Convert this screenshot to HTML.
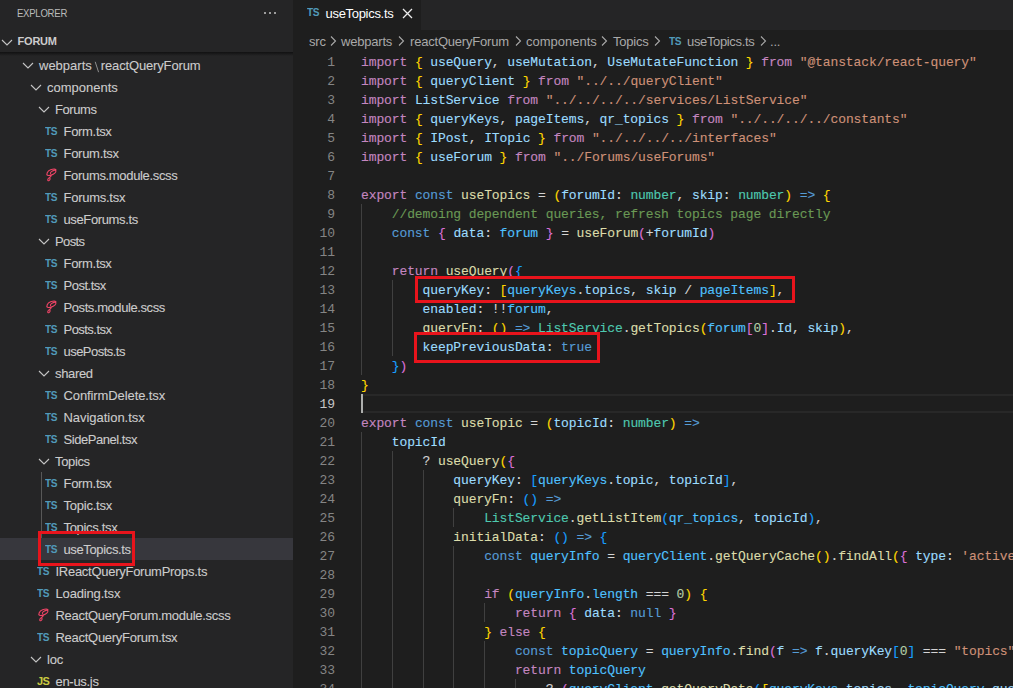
<!DOCTYPE html>
<html><head><meta charset="utf-8">
<style>
html,body{margin:0;padding:0;}
body{width:1013px;height:688px;overflow:hidden;position:relative;background:#1e1e1e;font-family:"Liberation Sans",sans-serif;}
#side{position:absolute;left:0;top:0;width:293px;height:688px;background:#252526;overflow:hidden;}
#side .title{position:absolute;left:17px;top:7px;font-size:11px;line-height:12px;color:#bbbbbb;letter-spacing:-0.3px;transform:scaleX(0.87);transform-origin:left top;}
#side .dots{position:absolute;left:262.8px;top:11.5px;}
#side .dots i{position:absolute;top:0;width:2.5px;height:2.5px;background:#c5c5c5;border-radius:50%;}
#side .sec{position:absolute;left:0;top:30px;width:293px;height:22px;}
#side .sec .nm{position:absolute;left:17.5px;top:0;font-size:11px;line-height:22px;font-weight:bold;color:#cccccc;letter-spacing:-0.2px;}
#side .sec .chev{position:absolute;left:1px;top:9px;}
#side .shadow{position:absolute;left:0;top:52px;width:293px;height:4px;background:linear-gradient(rgba(0,0,0,0.55),rgba(0,0,0,0));z-index:3;}
.row{position:absolute;left:0;width:293px;height:22px;}
.row.sel{background:#37373d;}
.row .nm{position:absolute;top:0;font-size:13px;line-height:22px;color:#cccccc;white-space:pre;letter-spacing:-0.25px;padding-top:0.5px;-webkit-text-stroke:0.1px currentColor;}
.row .ic{position:absolute;top:0;height:22px;}
.row .chev{position:absolute;left:0;top:8px;}
.bs{color:transparent;padding:0 2.6px 0 3px;}
.tsi{position:absolute;left:-1px;top:5px;font-size:11px;line-height:12px;font-weight:bold;color:#519aba;letter-spacing:-0.4px;transform:scaleX(0.92);transform-origin:left top;}
.jsi{position:absolute;left:-1px;top:5px;font-size:11px;line-height:12px;font-weight:bold;color:#cbcb41;letter-spacing:-0.6px;}
.sass{position:absolute;left:-4px;top:1px;}
.guide{position:absolute;left:41px;top:472px;width:1px;height:66px;background:#585858;}
.redbox{position:absolute;border:3px solid #e8141c;box-sizing:border-box;z-index:5;}

#tabs{position:absolute;left:293px;top:0;width:720px;height:30px;background:#252526;}
#tab{position:absolute;left:0;top:0;width:128px;height:30px;background:#1e1e1e;}
#tab .tsi{left:14px;top:5.5px;}
#tab .nm{position:absolute;left:32.5px;top:5.5px;font-size:13px;line-height:16px;color:#ffffff;letter-spacing:-0.3px;}
#tab .x{position:absolute;left:108.6px;top:7.6px;}
#crumbs{position:absolute;left:293px;top:30px;width:720px;height:22px;font-size:13px;color:#a9a9a9;}
#crumbs span.bc{position:absolute;top:1px;line-height:22px;white-space:pre;letter-spacing:-0.2px;}
#crumbs svg{position:absolute;top:6px;}
#crumbs .tsi{top:5px;}

#gutter{position:absolute;left:293px;top:52px;width:42px;}
.num{height:19px;line-height:19px;text-align:right;font-family:"Liberation Mono",monospace;font-size:13px;color:#858585;letter-spacing:-0.1px;padding-top:1px;box-sizing:border-box;}
.num.act{color:#c6c6c6;}
#code{position:absolute;left:361px;top:52px;width:700px;font-family:"Liberation Mono",monospace;font-size:13px;color:#d4d4d4;letter-spacing:-0.106px;-webkit-text-stroke:0.12px currentColor;}
.ln{height:19px;line-height:19px;white-space:pre;padding-top:1px;box-sizing:border-box;}
.ig{position:absolute;width:1px;height:19px;background:#404040;}
.curline{position:absolute;left:361px;top:394px;width:652px;height:19px;box-sizing:border-box;border-top:2px solid #282828;border-bottom:2px solid #282828;}
.cursor{position:absolute;left:361px;top:394px;width:2px;height:19px;background:#aeafad;z-index:4;}
.k{color:#c586c0}.s{color:#569cd6}.v{color:#9cdcfe}.c{color:#4fc1ff}.f{color:#dcdcaa}.t{color:#4ec9b0}.r{color:#ce9178}.m{color:#6a9955}.n{color:#b5cea8}
.b1{color:#ffd700}.b2{color:#da70d6}.b3{color:#179fff}
</style></head><body>
<div id="side">
  <div class="title">EXPLORER</div>
  <div class="dots"><i style="left:1px"></i><i style="left:6px"></i><i style="left:11px"></i></div>
  <div class="sec"><svg class="chev" width="12" height="7" viewBox="0 0 12 7"><path d="M1 1 L6 6 L11 1" fill="none" stroke="#c5c5c5" stroke-width="1.1"/></svg><span class="nm">FORUM</span></div>
  <div class="shadow"></div>
<div class="row" style="top:54px"><span class="ic" style="left:21.5px"><svg class="chev" width="12" height="7" viewBox="0 0 12 7"><path d="M1 1 L6 6 L11 1" fill="none" stroke="#c5c5c5" stroke-width="1.1"/></svg></span><span class="nm" style="left:39.0px;letter-spacing:-0.15px"><span style="letter-spacing:0">webparts</span><span class="bs">\</span>reactQueryForum</span><svg style="position:absolute;left:94.4px;top:7px" width="6" height="12" viewBox="0 0 6 12"><path d="M1.2 0.8 L4.6 11.2" stroke="#8f8f8f" stroke-width="1"/></svg></div>
<div class="row" style="top:76px"><span class="ic" style="left:29.5px"><svg class="chev" width="12" height="7" viewBox="0 0 12 7"><path d="M1 1 L6 6 L11 1" fill="none" stroke="#c5c5c5" stroke-width="1.1"/></svg></span><span class="nm" style="left:47.0px;letter-spacing:0.0040000000000000036px">components</span></div>
<div class="row" style="top:98px"><span class="ic" style="left:37.5px"><svg class="chev" width="12" height="7" viewBox="0 0 12 7"><path d="M1 1 L6 6 L11 1" fill="none" stroke="#c5c5c5" stroke-width="1.1"/></svg></span><span class="nm" style="left:55.0px;letter-spacing:-0.433px">Forums</span></div>
<div class="row" style="top:120px"><span class="ic" style="left:46px"><span class="tsi">TS</span></span><span class="nm" style="left:63.5px;letter-spacing:-0.312px">Form.tsx</span></div>
<div class="row" style="top:142px"><span class="ic" style="left:46px"><span class="tsi">TS</span></span><span class="nm" style="left:63.5px;letter-spacing:-0.28500000000000003px">Forum.tsx</span></div>
<div class="row" style="top:164px"><span class="ic" style="left:46px"><svg class="sass" width="18" height="18" viewBox="0 0 18 18"><path d="M8.6 8.6 C7.8 7.6 9.8 6 12 5.4 C14.2 4.8 14.6 6.6 12.8 8.2 C11 9.8 7.2 11 5.6 10.2 C4 9.4 5.2 6 8.6 4.8 C10.8 4 13.4 4 14 4.8 M9.4 10.4 C8.8 11.6 7.6 12.4 6.4 13.4 C5.2 14.6 5.8 16.4 7 15.6 C8.2 14.8 8.4 13.2 7.6 12.8" fill="none" stroke="#ee4466" stroke-width="1.1" stroke-linecap="round"/></svg></span><span class="nm" style="left:63.5px;letter-spacing:-0.332px">Forums.module.scss</span></div>
<div class="row" style="top:186px"><span class="ic" style="left:46px"><span class="tsi">TS</span></span><span class="nm" style="left:63.5px;letter-spacing:-0.26px">Forums.tsx</span></div>
<div class="row" style="top:208px"><span class="ic" style="left:46px"><span class="tsi">TS</span></span><span class="nm" style="left:63.5px;letter-spacing:-0.374px">useForums.ts</span></div>
<div class="row" style="top:230px"><span class="ic" style="left:37.5px"><svg class="chev" width="12" height="7" viewBox="0 0 12 7"><path d="M1 1 L6 6 L11 1" fill="none" stroke="#c5c5c5" stroke-width="1.1"/></svg></span><span class="nm" style="left:55.0px;letter-spacing:-0.6px">Posts</span></div>
<div class="row" style="top:252px"><span class="ic" style="left:46px"><span class="tsi">TS</span></span><span class="nm" style="left:63.5px;letter-spacing:-0.312px">Form.tsx</span></div>
<div class="row" style="top:274px"><span class="ic" style="left:46px"><span class="tsi">TS</span></span><span class="nm" style="left:63.5px;letter-spacing:-0.49600000000000005px">Post.tsx</span></div>
<div class="row" style="top:296px"><span class="ic" style="left:46px"><svg class="sass" width="18" height="18" viewBox="0 0 18 18"><path d="M8.6 8.6 C7.8 7.6 9.8 6 12 5.4 C14.2 4.8 14.6 6.6 12.8 8.2 C11 9.8 7.2 11 5.6 10.2 C4 9.4 5.2 6 8.6 4.8 C10.8 4 13.4 4 14 4.8 M9.4 10.4 C8.8 11.6 7.6 12.4 6.4 13.4 C5.2 14.6 5.8 16.4 7 15.6 C8.2 14.8 8.4 13.2 7.6 12.8" fill="none" stroke="#ee4466" stroke-width="1.1" stroke-linecap="round"/></svg></span><span class="nm" style="left:63.5px;letter-spacing:-0.41500000000000004px">Posts.module.scss</span></div>
<div class="row" style="top:318px"><span class="ic" style="left:46px"><span class="tsi">TS</span></span><span class="nm" style="left:63.5px;letter-spacing:-0.5409999999999999px">Posts.tsx</span></div>
<div class="row" style="top:340px"><span class="ic" style="left:46px"><span class="tsi">TS</span></span><span class="nm" style="left:63.5px;letter-spacing:-0.5299999999999999px">usePosts.ts</span></div>
<div class="row" style="top:362px"><span class="ic" style="left:37.5px"><svg class="chev" width="12" height="7" viewBox="0 0 12 7"><path d="M1 1 L6 6 L11 1" fill="none" stroke="#c5c5c5" stroke-width="1.1"/></svg></span><span class="nm" style="left:55.0px;letter-spacing:-0.33px">shared</span></div>
<div class="row" style="top:384px"><span class="ic" style="left:46px"><span class="tsi">TS</span></span><span class="nm" style="left:63.5px;letter-spacing:-0.098px">ConfirmDelete.tsx</span></div>
<div class="row" style="top:406px"><span class="ic" style="left:46px"><span class="tsi">TS</span></span><span class="nm" style="left:63.5px;letter-spacing:-0.033999999999999996px">Navigation.tsx</span></div>
<div class="row" style="top:428px"><span class="ic" style="left:46px"><span class="tsi">TS</span></span><span class="nm" style="left:63.5px;letter-spacing:-0.452px">SidePanel.tsx</span></div>
<div class="row" style="top:450px"><span class="ic" style="left:37.5px"><svg class="chev" width="12" height="7" viewBox="0 0 12 7"><path d="M1 1 L6 6 L11 1" fill="none" stroke="#c5c5c5" stroke-width="1.1"/></svg></span><span class="nm" style="left:55.0px;letter-spacing:-0.35200000000000004px">Topics</span></div>
<div class="row" style="top:472px"><span class="ic" style="left:46px"><span class="tsi">TS</span></span><span class="nm" style="left:63.5px;letter-spacing:-0.312px">Form.tsx</span></div>
<div class="row" style="top:494px"><span class="ic" style="left:46px"><span class="tsi">TS</span></span><span class="nm" style="left:63.5px;letter-spacing:-0.232px">Topic.tsx</span></div>
<div class="row" style="top:516px"><span class="ic" style="left:46px"><span class="tsi">TS</span></span><span class="nm" style="left:63.5px;letter-spacing:-0.324px">Topics.tsx</span></div>
<div class="row sel" style="top:538px"><span class="ic" style="left:46px"><span class="tsi">TS</span></span><span class="nm" style="left:63.5px;letter-spacing:-0.36400000000000005px">useTopics.ts</span></div>
<div class="row" style="top:560px"><span class="ic" style="left:38px"><span class="tsi">TS</span></span><span class="nm" style="left:55.5px;letter-spacing:-0.274px">IReactQueryForumProps.ts</span></div>
<div class="row" style="top:582px"><span class="ic" style="left:38px"><span class="tsi">TS</span></span><span class="nm" style="left:55.5px;letter-spacing:-0.16px">Loading.tsx</span></div>
<div class="row" style="top:604px"><span class="ic" style="left:38px"><svg class="sass" width="18" height="18" viewBox="0 0 18 18"><path d="M8.6 8.6 C7.8 7.6 9.8 6 12 5.4 C14.2 4.8 14.6 6.6 12.8 8.2 C11 9.8 7.2 11 5.6 10.2 C4 9.4 5.2 6 8.6 4.8 C10.8 4 13.4 4 14 4.8 M9.4 10.4 C8.8 11.6 7.6 12.4 6.4 13.4 C5.2 14.6 5.8 16.4 7 15.6 C8.2 14.8 8.4 13.2 7.6 12.8" fill="none" stroke="#ee4466" stroke-width="1.1" stroke-linecap="round"/></svg></span><span class="nm" style="left:55.5px;letter-spacing:-0.29400000000000004px">ReactQueryForum.module.scss</span></div>
<div class="row" style="top:626px"><span class="ic" style="left:38px"><span class="tsi">TS</span></span><span class="nm" style="left:55.5px;letter-spacing:-0.28px">ReactQueryForum.tsx</span></div>
<div class="row" style="top:648px"><span class="ic" style="left:29.5px"><svg class="chev" width="12" height="7" viewBox="0 0 12 7"><path d="M1 1 L6 6 L11 1" fill="none" stroke="#c5c5c5" stroke-width="1.1"/></svg></span><span class="nm" style="left:47.0px;letter-spacing:-0.122px">loc</span></div>
<div class="row" style="top:670px"><span class="ic" style="left:38px"><span class="jsi">JS</span></span><span class="nm" style="left:55.5px;letter-spacing:-0.29300000000000004px">en-us.js</span></div>
<div class="row" style="top:692px"><span class="ic" style="left:38px"><span class="tsi">TS</span></span><span class="nm" style="left:55.5px;letter-spacing:-0.26px">mystrings.d.ts</span></div>
  <div class="guide"></div>
  <div class="redbox" style="left:38px;top:531px;width:97px;height:35px;"></div>
</div>
<div id="tabs">
  <div id="tab"><span class="tsi">TS</span><span class="nm">useTopics.ts</span>
    <svg class="x" width="11" height="11" viewBox="0 0 11 11"><path d="M1 1 L10 10 M10 1 L1 10" stroke="#ececec" stroke-width="1.3"/></svg>
  </div>
</div>
<div id="crumbs">
  <span class="bc" style="left:16px">src</span>
  <svg class="cv" style="left:37px" width="7" height="10" viewBox="0 0 7 10"><path d="M1 0.5 L5.5 5 L1 9.5" fill="none" stroke="#a9a9a9" stroke-width="1.1"/></svg>
  <span class="bc" style="left:48px">webparts</span>
  <svg class="cv" style="left:105px" width="7" height="10" viewBox="0 0 7 10"><path d="M1 0.5 L5.5 5 L1 9.5" fill="none" stroke="#a9a9a9" stroke-width="1.1"/></svg>
  <span class="bc" style="left:117px">reactQueryForum</span>
  <svg class="cv" style="left:222px" width="7" height="10" viewBox="0 0 7 10"><path d="M1 0.5 L5.5 5 L1 9.5" fill="none" stroke="#a9a9a9" stroke-width="1.1"/></svg>
  <span class="bc" style="left:233px;letter-spacing:0px">components</span>
  <svg class="cv" style="left:308px" width="7" height="10" viewBox="0 0 7 10"><path d="M1 0.5 L5.5 5 L1 9.5" fill="none" stroke="#a9a9a9" stroke-width="1.1"/></svg>
  <span class="bc" style="left:320px">Topics</span>
  <svg class="cv" style="left:361px" width="7" height="10" viewBox="0 0 7 10"><path d="M1 0.5 L5.5 5 L1 9.5" fill="none" stroke="#a9a9a9" stroke-width="1.1"/></svg>
  <span class="tsi" style="left:376px">TS</span>
  <span class="bc" style="left:394px;letter-spacing:-0.35px">useTopics.ts</span>
  <svg class="cv" style="left:467px" width="7" height="10" viewBox="0 0 7 10"><path d="M1 0.5 L5.5 5 L1 9.5" fill="none" stroke="#a9a9a9" stroke-width="1.1"/></svg>
  <span class="bc" style="left:477px">...</span>
</div>
<div id="gutter"><div class="num">1</div><div class="num">2</div><div class="num">3</div><div class="num">4</div><div class="num">5</div><div class="num">6</div><div class="num">7</div><div class="num">8</div><div class="num">9</div><div class="num">10</div><div class="num">11</div><div class="num">12</div><div class="num">13</div><div class="num">14</div><div class="num">15</div><div class="num">16</div><div class="num">17</div><div class="num">18</div><div class="num act">19</div><div class="num">20</div><div class="num">21</div><div class="num">22</div><div class="num">23</div><div class="num">24</div><div class="num">25</div><div class="num">26</div><div class="num">27</div><div class="num">28</div><div class="num">29</div><div class="num">30</div><div class="num">31</div><div class="num">32</div><div class="num">33</div><div class="num">34</div><div class="num">35</div></div>
<div class="curline"></div>
<div class="ig" style="left:361.00px;top:204px"></div>
<div class="ig" style="left:361.00px;top:223px"></div>
<div class="ig" style="left:361.00px;top:242px"></div>
<div class="ig" style="left:361.00px;top:261px"></div>
<div class="ig" style="left:361.00px;top:280px"></div>
<div class="ig" style="left:391.78px;top:280px"></div>
<div class="ig" style="left:361.00px;top:299px"></div>
<div class="ig" style="left:391.78px;top:299px"></div>
<div class="ig" style="left:361.00px;top:318px"></div>
<div class="ig" style="left:391.78px;top:318px"></div>
<div class="ig" style="left:361.00px;top:337px"></div>
<div class="ig" style="left:391.78px;top:337px"></div>
<div class="ig" style="left:361.00px;top:356px"></div>
<div class="ig" style="left:361.00px;top:432px"></div>
<div class="ig" style="left:361.00px;top:451px"></div>
<div class="ig" style="left:391.78px;top:451px"></div>
<div class="ig" style="left:361.00px;top:470px"></div>
<div class="ig" style="left:391.78px;top:470px"></div>
<div class="ig" style="left:422.56px;top:470px"></div>
<div class="ig" style="left:361.00px;top:489px"></div>
<div class="ig" style="left:391.78px;top:489px"></div>
<div class="ig" style="left:422.56px;top:489px"></div>
<div class="ig" style="left:361.00px;top:508px"></div>
<div class="ig" style="left:391.78px;top:508px"></div>
<div class="ig" style="left:422.56px;top:508px"></div>
<div class="ig" style="left:453.34px;top:508px"></div>
<div class="ig" style="left:361.00px;top:527px"></div>
<div class="ig" style="left:391.78px;top:527px"></div>
<div class="ig" style="left:422.56px;top:527px"></div>
<div class="ig" style="left:361.00px;top:546px"></div>
<div class="ig" style="left:391.78px;top:546px"></div>
<div class="ig" style="left:422.56px;top:546px"></div>
<div class="ig" style="left:453.34px;top:546px"></div>
<div class="ig" style="left:361.00px;top:565px"></div>
<div class="ig" style="left:391.78px;top:565px"></div>
<div class="ig" style="left:422.56px;top:565px"></div>
<div class="ig" style="left:453.34px;top:565px"></div>
<div class="ig" style="left:361.00px;top:584px"></div>
<div class="ig" style="left:391.78px;top:584px"></div>
<div class="ig" style="left:422.56px;top:584px"></div>
<div class="ig" style="left:453.34px;top:584px"></div>
<div class="ig" style="left:361.00px;top:603px"></div>
<div class="ig" style="left:391.78px;top:603px"></div>
<div class="ig" style="left:422.56px;top:603px"></div>
<div class="ig" style="left:453.34px;top:603px"></div>
<div class="ig" style="left:484.12px;top:603px"></div>
<div class="ig" style="left:361.00px;top:622px"></div>
<div class="ig" style="left:391.78px;top:622px"></div>
<div class="ig" style="left:422.56px;top:622px"></div>
<div class="ig" style="left:453.34px;top:622px"></div>
<div class="ig" style="left:361.00px;top:641px"></div>
<div class="ig" style="left:391.78px;top:641px"></div>
<div class="ig" style="left:422.56px;top:641px"></div>
<div class="ig" style="left:453.34px;top:641px"></div>
<div class="ig" style="left:484.12px;top:641px"></div>
<div class="ig" style="left:361.00px;top:660px"></div>
<div class="ig" style="left:391.78px;top:660px"></div>
<div class="ig" style="left:422.56px;top:660px"></div>
<div class="ig" style="left:453.34px;top:660px"></div>
<div class="ig" style="left:484.12px;top:660px"></div>
<div class="ig" style="left:361.00px;top:679px"></div>
<div class="ig" style="left:391.78px;top:679px"></div>
<div class="ig" style="left:422.56px;top:679px"></div>
<div class="ig" style="left:453.34px;top:679px"></div>
<div class="ig" style="left:484.12px;top:679px"></div>
<div class="ig" style="left:514.91px;top:679px"></div>
<div class="ig" style="left:361.00px;top:698px"></div>
<div class="ig" style="left:391.78px;top:698px"></div>
<div class="ig" style="left:422.56px;top:698px"></div>
<div class="ig" style="left:453.34px;top:698px"></div>
<div class="ig" style="left:484.12px;top:698px"></div>
<div class="ig" style="left:514.91px;top:698px"></div>
<div class="cursor"></div>
<div id="code">
<div class="ln"><span class="k">import</span> <span class="b1">{</span> <span class="v">useQuery</span>, <span class="v">useMutation</span>, <span class="v">UseMutateFunction</span> <span class="b1">}</span> <span class="k">from</span> <span class="r">&quot;@tanstack/react-query&quot;</span></div>
<div class="ln"><span class="k">import</span> <span class="b1">{</span> <span class="v">queryClient</span> <span class="b1">}</span> <span class="k">from</span> <span class="r">&quot;../../queryClient&quot;</span></div>
<div class="ln"><span class="k">import</span> <span class="v">ListService</span> <span class="k">from</span> <span class="r">&quot;../../../../services/ListService&quot;</span></div>
<div class="ln"><span class="k">import</span> <span class="b1">{</span> <span class="v">queryKeys</span>, <span class="v">pageItems</span>, <span class="v">qr_topics</span> <span class="b1">}</span> <span class="k">from</span> <span class="r">&quot;../../../../constants&quot;</span></div>
<div class="ln"><span class="k">import</span> <span class="b1">{</span> <span class="v">IPost</span>, <span class="v">ITopic</span> <span class="b1">}</span> <span class="k">from</span> <span class="r">&quot;../../../../interfaces&quot;</span></div>
<div class="ln"><span class="k">import</span> <span class="b1">{</span> <span class="v">useForum</span> <span class="b1">}</span> <span class="k">from</span> <span class="r">&quot;../Forums/useForums&quot;</span></div>
<div class="ln"></div>
<div class="ln"><span class="k">export</span> <span class="s">const</span> <span class="f">useTopics</span> = <span class="b1">(</span><span class="v">forumId</span>: <span class="t">number</span>, <span class="v">skip</span>: <span class="t">number</span><span class="b1">)</span> <span class="s">=&gt;</span> <span class="b1">{</span></div>
<div class="ln">    <span class="m">//demoing dependent queries, refresh topics page directly</span></div>
<div class="ln">    <span class="s">const</span> <span class="b2">{</span> <span class="v">data</span>: <span class="c">forum</span> <span class="b2">}</span> = <span class="f">useForum</span><span class="b2">(</span>+<span class="v">forumId</span><span class="b2">)</span></div>
<div class="ln"></div>
<div class="ln">    <span class="k">return</span> <span class="f">useQuery</span><span class="b2">(</span><span class="b3">{</span></div>
<div class="ln">        <span class="v">queryKey</span>: <span class="b1">[</span><span class="c">queryKeys</span>.<span class="v">topics</span>, <span class="v">skip</span> / <span class="c">pageItems</span><span class="b1">]</span>,</div>
<div class="ln">        <span class="v">enabled</span>: !!<span class="c">forum</span>,</div>
<div class="ln">        <span class="f">queryFn</span>: <span class="b1">()</span> <span class="s">=&gt;</span> <span class="t">ListService</span>.<span class="f">getTopics</span><span class="b1">(</span><span class="c">forum</span><span class="b2">[</span><span class="n">0</span><span class="b2">]</span>.<span class="v">Id</span>, <span class="v">skip</span><span class="b1">)</span>,</div>
<div class="ln">        <span class="v">keepPreviousData</span>: <span class="s">true</span></div>
<div class="ln">    <span class="b3">}</span><span class="b2">)</span></div>
<div class="ln"><span class="b1">}</span></div>
<div class="ln"></div>
<div class="ln"><span class="k">export</span> <span class="s">const</span> <span class="f">useTopic</span> = <span class="b1">(</span><span class="v">topicId</span>: <span class="t">number</span><span class="b1">)</span> <span class="s">=&gt;</span></div>
<div class="ln">    <span class="v">topicId</span></div>
<div class="ln">        ? <span class="f">useQuery</span><span class="b1">(</span><span class="b2">{</span></div>
<div class="ln">            <span class="v">queryKey</span>: <span class="b3">[</span><span class="c">queryKeys</span>.<span class="v">topic</span>, <span class="v">topicId</span><span class="b3">]</span>,</div>
<div class="ln">            <span class="f">queryFn</span>: <span class="b3">()</span> <span class="s">=&gt;</span></div>
<div class="ln">                <span class="t">ListService</span>.<span class="f">getListItem</span><span class="b3">(</span><span class="c">qr_topics</span>, <span class="v">topicId</span><span class="b3">)</span>,</div>
<div class="ln">            <span class="f">initialData</span>: <span class="b3">()</span> <span class="s">=&gt;</span> <span class="b3">{</span></div>
<div class="ln">                <span class="s">const</span> <span class="c">queryInfo</span> = <span class="c">queryClient</span>.<span class="f">getQueryCache</span><span class="b1">()</span>.<span class="f">findAll</span><span class="b1">(</span><span class="b2">{</span> <span class="v">type</span>: <span class="r">&#x27;active&#x27;</span> <span class="b2">}</span><span class="b1">)</span></div>
<div class="ln"></div>
<div class="ln">                <span class="k">if</span> <span class="b1">(</span><span class="c">queryInfo</span>.<span class="c">length</span> === <span class="n">0</span><span class="b1">)</span> <span class="b1">{</span></div>
<div class="ln">                    <span class="k">return</span> <span class="b2">{</span> <span class="v">data</span>: <span class="s">null</span> <span class="b2">}</span></div>
<div class="ln">                <span class="b1">}</span> <span class="k">else</span> <span class="b1">{</span></div>
<div class="ln">                    <span class="s">const</span> <span class="c">topicQuery</span> = <span class="c">queryInfo</span>.<span class="f">find</span><span class="b2">(</span><span class="v">f</span> <span class="s">=&gt;</span> <span class="v">f</span>.<span class="v">queryKey</span><span class="b3">[</span><span class="n">0</span><span class="b3">]</span> === <span class="r">&quot;topics&quot;</span><span class="b2">)</span></div>
<div class="ln">                    <span class="k">return</span> <span class="c">topicQuery</span></div>
<div class="ln">                        ? <span class="b2">(</span><span class="c">queryClient</span>.<span class="f">getQueryData</span><span class="b3">(</span><span class="b1">[</span><span class="c">queryKeys</span>.<span class="v">topics</span>, <span class="c">topicQuery</span>.<span class="v">queryKey</span><span class="b2">[</span><span class="n">1</span><span class="b2">]</span><span class="b1">]</span><span class="b3">)</span></div>
<div class="ln">                        : <span class="s">undefined</span></div>
</div>
<div class="redbox" style="left:415px;top:276px;width:380px;height:27px;"></div>
<div class="redbox" style="left:414px;top:332px;width:186px;height:31px;"></div>
</body></html>
